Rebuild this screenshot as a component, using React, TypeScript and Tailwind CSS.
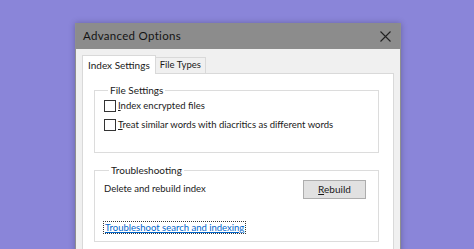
import React from 'react';

const font = { fontFamily: 'Lato, "Noto Sans", sans-serif' };

const CheckRow: React.FC<{ hot: string; rest: string }> = ({ hot, rest }) => (
  <label className="flex items-center gap-[2px] h-[19px]">
    <span className="w-[12px] h-[12px] border border-[#333] bg-white shrink-0" />
    <span className="text-[9.5px] text-[#1a1a1a] leading-none">
      <span className="underline underline-offset-1">{hot}</span>
      {rest}
    </span>
  </label>
);

export default function App() {
  return (
    <div className="w-[474px] h-[249px] overflow-hidden bg-[#8a85d9]" style={font}>
      <div className="ml-[75px] mt-[23px] w-[326px] h-[240px] bg-[#f0f0f0] border-x border-[#8f8f8f] shadow-[0_0_6px_rgba(0,0,0,0.25)]">
        {/* title bar */}
        <div className="h-[26px] bg-[#8c8c8c] flex items-center justify-between pl-[7px] pr-[9px]">
          <span className="text-[11.5px] tracking-[0.3px] text-[#141414]">Advanced Options</span>
          <svg width="11" height="11" viewBox="0 0 11 11">
            <path d="M0.5 0.5 L10.5 10.5 M10.5 0.5 L0.5 10.5" stroke="#222" strokeWidth="1.1" />
          </svg>
        </div>

        <div className="px-[6px] pt-[6px]">
          {/* tabs */}
          <div className="flex items-end h-[18px] relative z-10">
            <div className="h-[19px] px-[5px] bg-white border border-b-0 border-[#d9d9d9] flex items-center text-[10px] text-[#1a1a1a] -mb-[1px]">
              Index Settings
            </div>
            <div className="h-[16px] px-[4px] bg-[#f0f0f0] border border-l-0 border-b-0 border-[#d9d9d9] flex items-center text-[9.5px] text-[#1a1a1a]">
              File Types
            </div>
          </div>

          {/* panel */}
          <div className="bg-white border border-[#d9d9d9] h-[200px] pl-[11px] pr-[14px] pt-[10px]">
            <fieldset className="border border-[#dcdcdc] pl-[9px] pb-[14px] h-[69px]">
              <legend className="ml-[4px] px-[2px] text-[10px] text-[#1a1a1a] leading-[12px]">File Settings</legend>
              <div className="flex flex-col">
                <CheckRow hot="I" rest="ndex encrypted files" />
                <CheckRow hot="T" rest="reat similar words with diacritics as different words" />
              </div>
            </fieldset>

            <fieldset className="mt-[11px] border border-[#dcdcdc] pl-[9px] pr-[12px] h-[78px]">
              <legend className="ml-[5px] px-[2px] text-[10px] text-[#1a1a1a] leading-[12px]">Troubleshooting</legend>
              <div className="flex items-center justify-between mt-[4px]">
                <span className="text-[9.5px] text-[#1a1a1a]">Delete and rebuild index</span>
                <button className="w-[63px] h-[19px] bg-[#e1e1e1] border border-[#adadad] text-[10px] text-[#1a1a1a]">
                  <span className="underline underline-offset-1">R</span>ebuild
                </button>
              </div>
              <div className="mt-[14px]">
                <span className="text-[9.5px] text-[#0066cc] underline outline-1 outline-dotted outline-[#333] px-[1px]">
                  Troubleshoot search and indexing
                </span>
              </div>
            </fieldset>
          </div>
        </div>
      </div>
    </div>
  );
}
